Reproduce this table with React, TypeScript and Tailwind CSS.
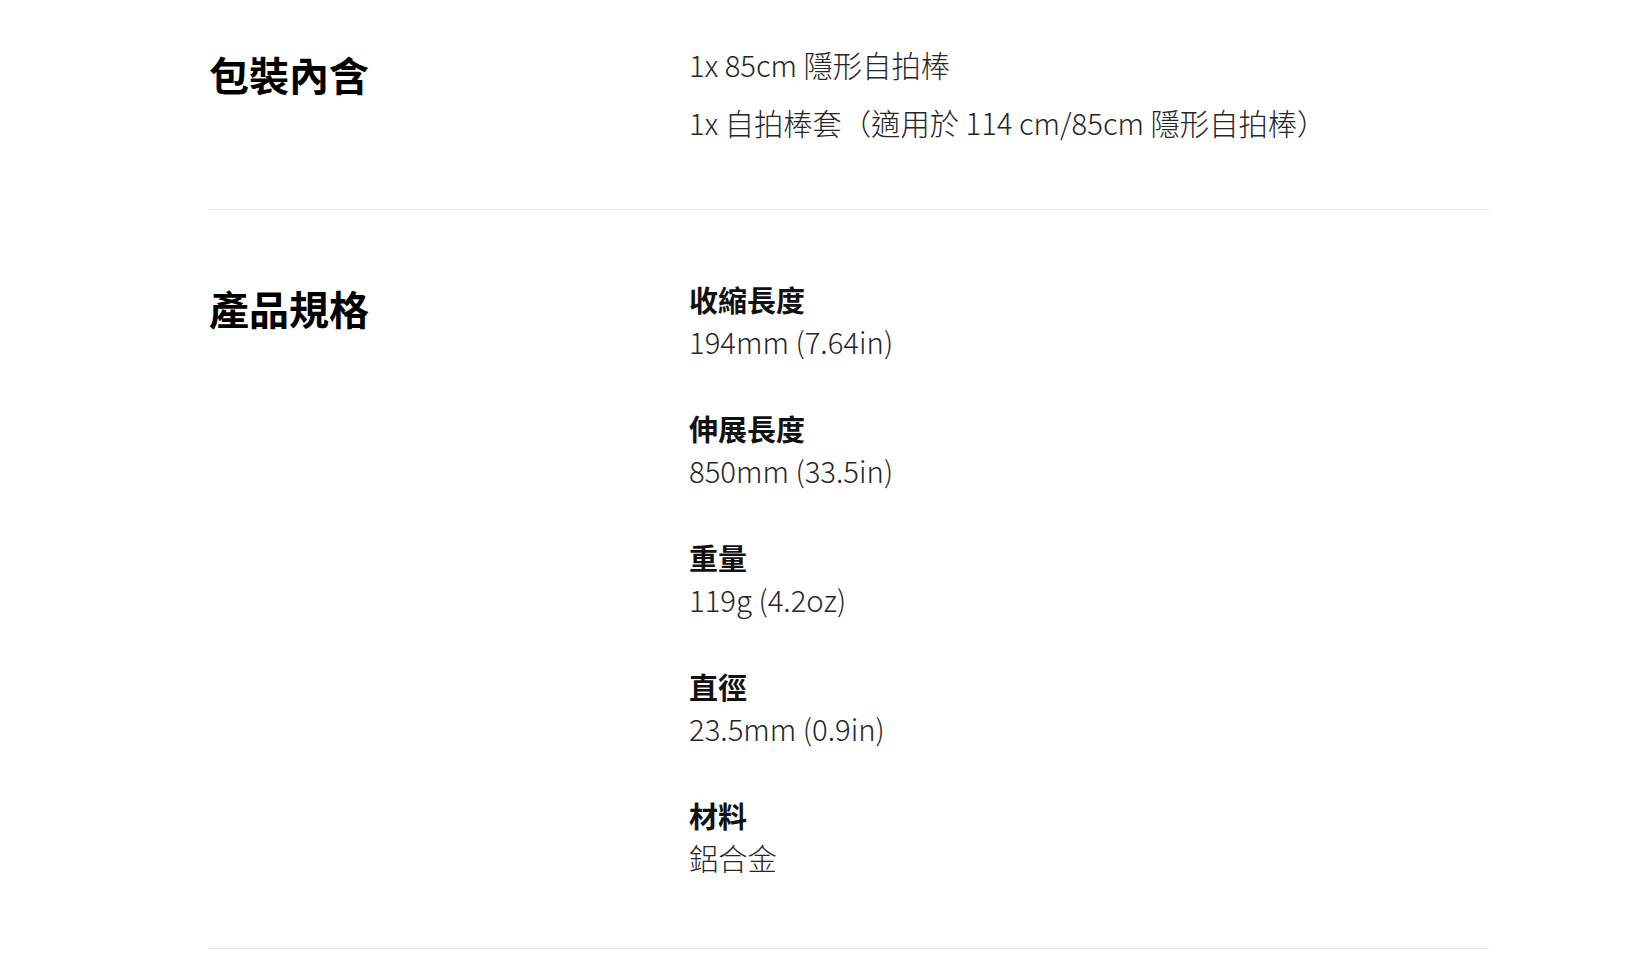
import React from 'react';

const packageItems = ['1x 85cm 隱形自拍棒', '1x 自拍棒套（適用於 114 cm/85cm 隱形自拍棒）'];

const specs = [
  { label: '收縮長度', value: '194mm (7.64in)' },
  { label: '伸展長度', value: '850mm (33.5in)' },
  { label: '重量', value: '119g (4.2oz)' },
  { label: '直徑', value: '23.5mm (0.9in)' },
  { label: '材料', value: '鋁合金' },
];

const font = { fontFamily: '"Noto Sans CJK TC", "Noto Sans", sans-serif' };
const light = { fontFamily: '"Noto Sans CJK TC Light", "Noto Sans CJK TC", "Noto Sans", sans-serif' };

const App: React.FC = () => {
  return (
    <div className="min-h-screen bg-white text-black" style={font}>
      <div className="ml-[209px] w-[1280px]">
        {/* 包裝內含 */}
        <section className="grid grid-cols-[480px_1fr] pt-[43px] pb-[66px] border-b border-[#e6e6e6]">
          <h2 className="text-[40px] leading-[60px] font-bold mt-[1px]">包裝內含</h2>
          <div className="flex flex-col gap-4">
            {packageItems.map((item) => (
              <p key={item} className="text-[29.3px] leading-[42px] font-light text-[#262626]" style={light}>
                {item}
              </p>
            ))}
          </div>
        </section>

        {/* 產品規格 */}
        <section className="grid grid-cols-[480px_1fr] pt-[68px] pb-[68px] border-b border-[#e6e6e6]">
          <h2 className="text-[40px] leading-[60px] font-bold">產品規格</h2>
          <div className="flex flex-col gap-[43px]">
            {specs.map((s) => (
              <div key={s.label}>
                <p className="text-[29px] leading-[42px] font-bold text-[#111]">{s.label}</p>
                <p className="text-[29.3px] leading-[44px] font-light text-[#262626] -mt-[1px] mb-[1px]" style={light}>
                  {s.value}
                </p>
              </div>
            ))}
          </div>
        </section>
      </div>
    </div>
  );
};

export default App;
